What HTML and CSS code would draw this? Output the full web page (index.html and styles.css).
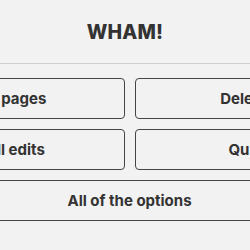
FILE: index.html
```html
<!DOCTYPE html>
<html>
<head>
<meta charset="utf-8">
<link rel="stylesheet" href="styles.css">
</head>
<body>
<header class="header"><h1 class="title">WHAM!</h1></header>
<div class="panel">
  <div class="grid">
    <button class="btn">In pages</button>
    <button class="btn">Delete</button>
    <button class="btn">All edits</button>
    <button class="btn">Quit</button>
    <button class="btn wide">All of the options</button>
  </div>
</div>
</body>
</html>
```
FILE: styles.css
```css
html, body {
  margin: 0;
  padding: 0;
  background: #f2f2f2;
  overflow: hidden;
}
body {
  font-family: Inter, "Noto Sans", sans-serif;
  color: #333;
  width: 250px;
  height: 250px;
}
.header {
  height: 63px;
  border-bottom: 1px solid #cfcfcf;
  display: flex;
  align-items: center;
  justify-content: center;
}
.title {
  margin: 0;
  font-size: 19.5px;
  font-weight: 800;
  color: #333;
  letter-spacing: 0.2px;
}
.panel {
  padding-top: 14px;
}
.grid {
  margin-left: -94px;
  width: 447px;
  display: grid;
  grid-template-columns: 1fr 1fr;
  column-gap: 10px;
  row-gap: 10px;
}
.btn {
  height: 41px;
  background: #f2f2f2;
  border: 1.5px solid #444;
  border-radius: 4px;
  font-family: Inter, "Noto Sans", sans-serif;
  font-size: 15px;
  font-weight: 700;
  color: #333;
  padding: 0;
}
.wide {
  grid-column: 1 / 3;
}
```
